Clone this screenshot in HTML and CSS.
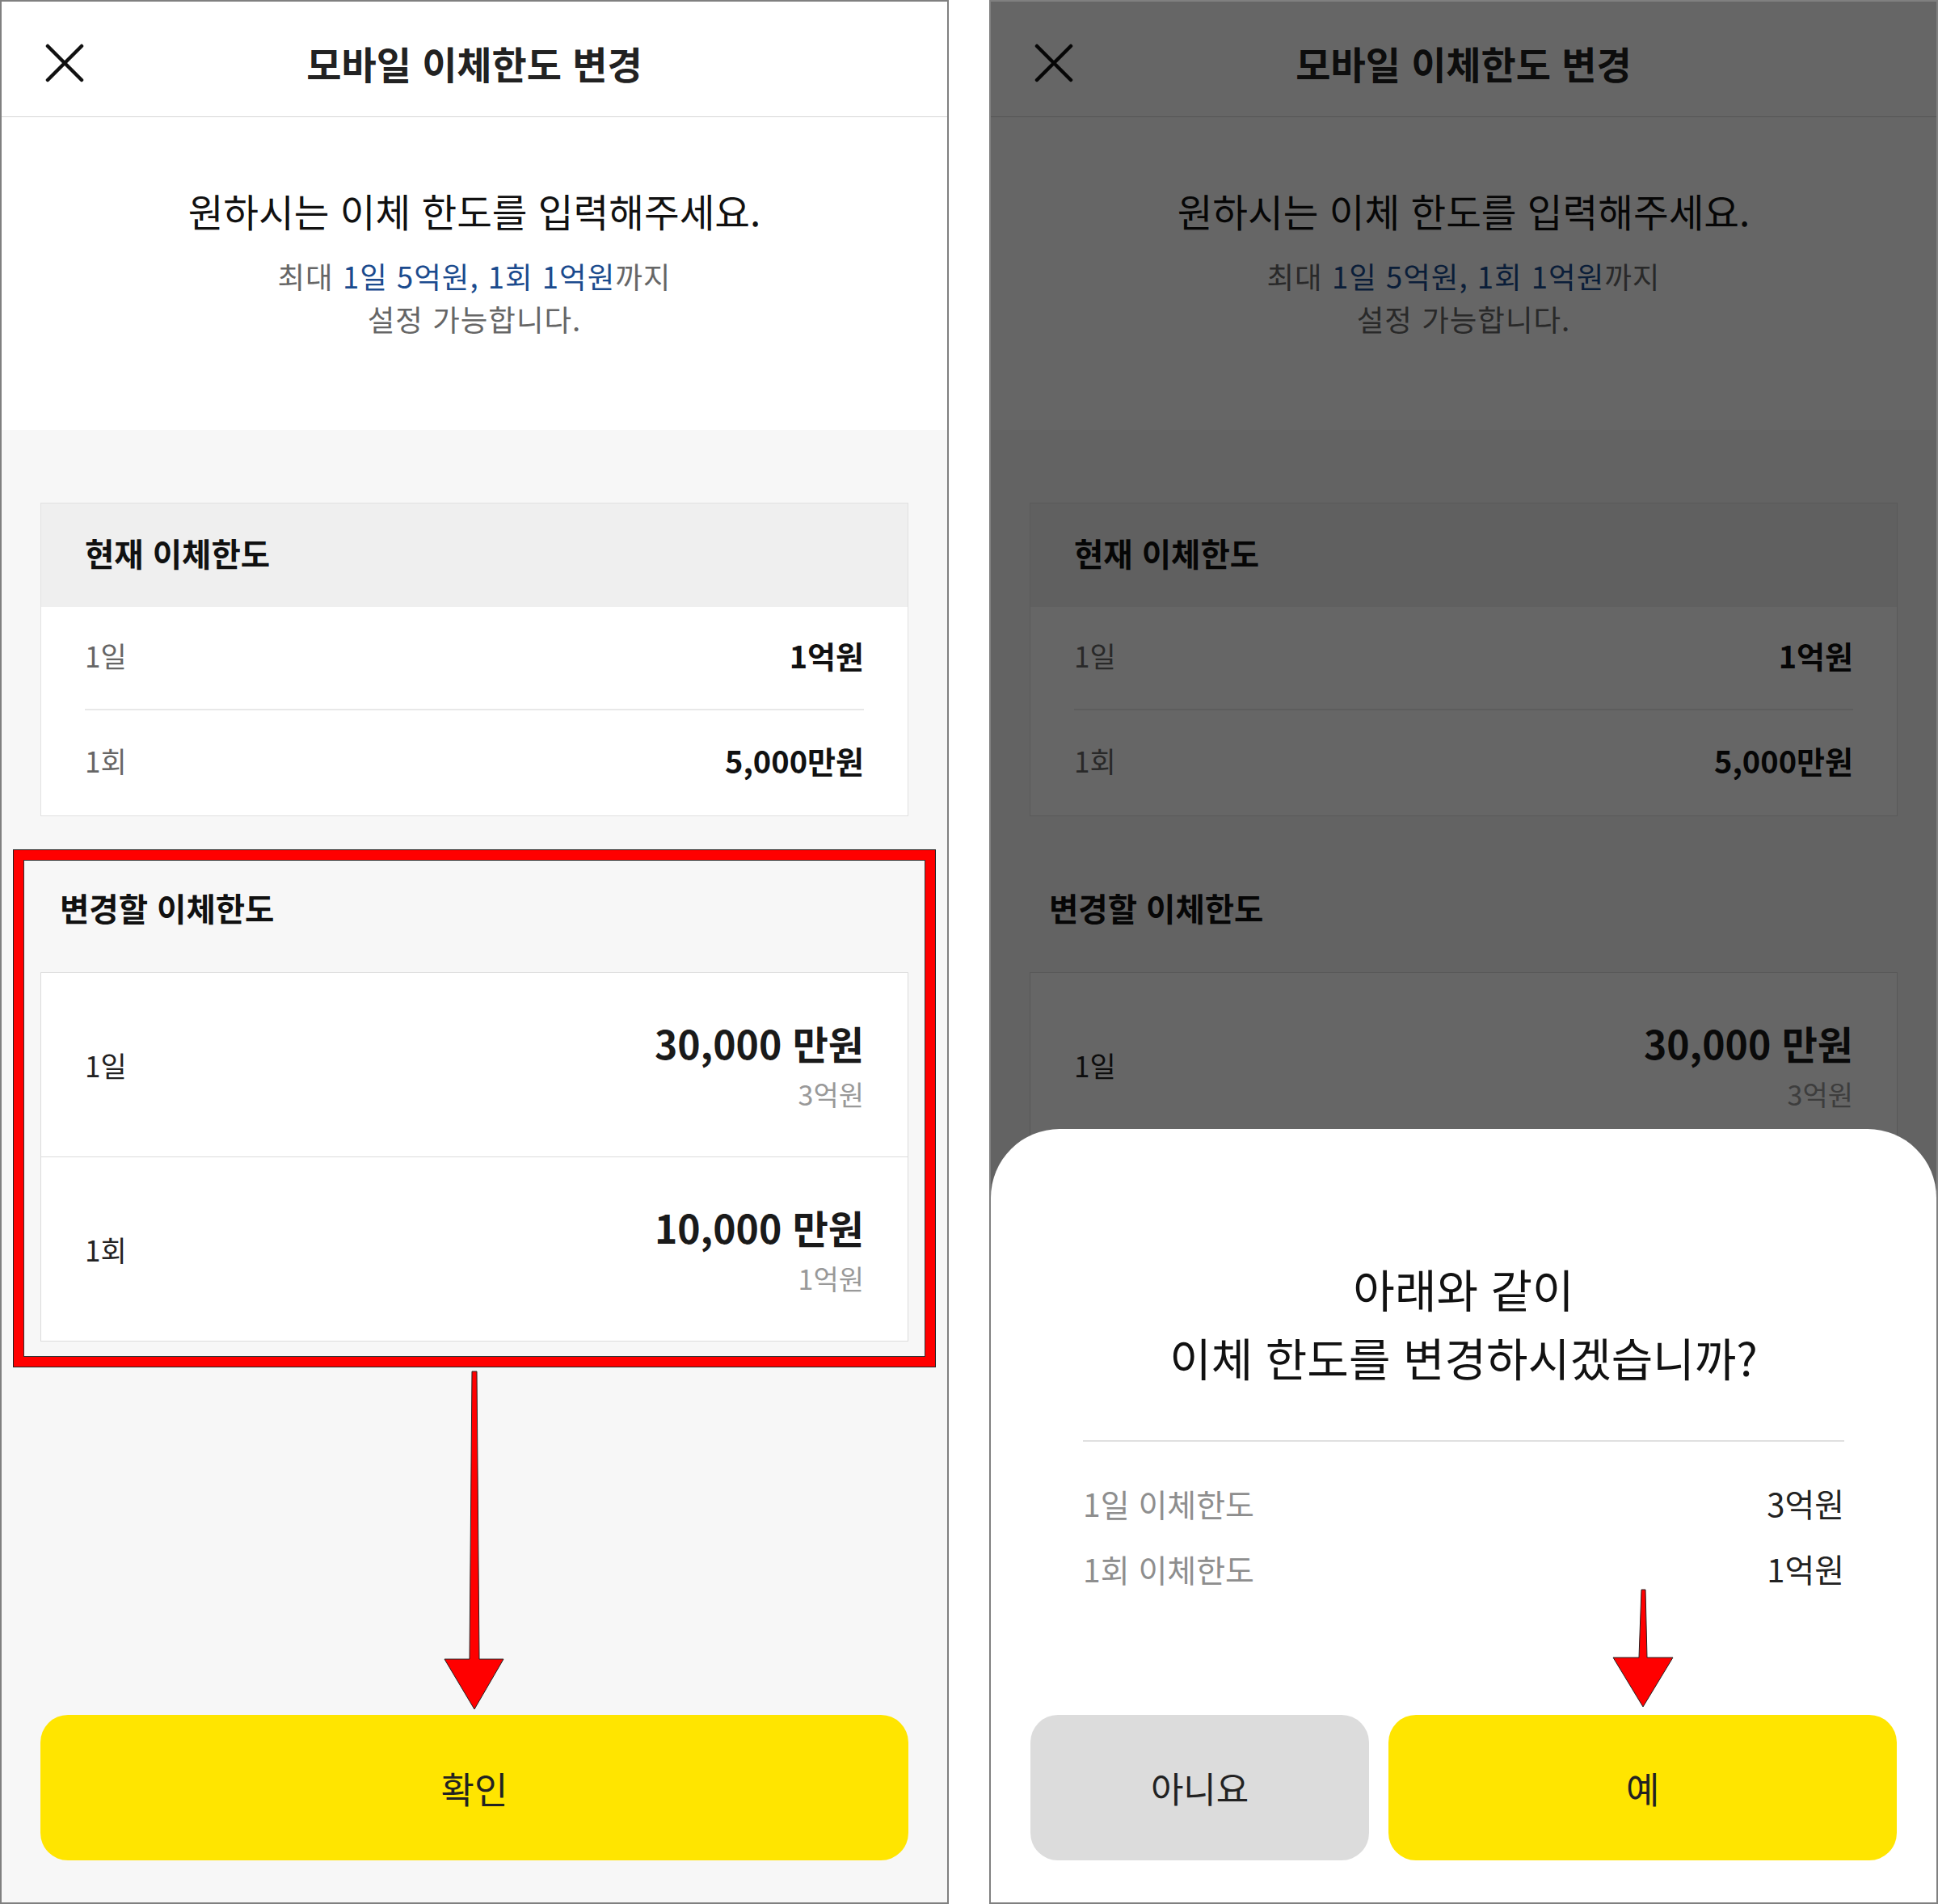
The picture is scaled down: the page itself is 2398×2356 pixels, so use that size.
FILE: index.html
```html
<!DOCTYPE html>
<html lang="ko">
<head>
<meta charset="utf-8">
<title>모바일 이체한도 변경</title>
<link rel="stylesheet" href="styles.css">
</head>
<body>
<div class="page">
  <section class="phone">
    <header class="topbar">
      <span class="close"><svg viewBox="0 0 48 48" width="48" height="48"><path d="M3 3L45 45M45 3L3 45" stroke="#111" stroke-width="4.5" stroke-linecap="round" fill="none"/></svg></span>
      <h1 class="title">모바일 이체한도 변경</h1>
      <span></span>
    </header>
    <div class="intro">
      <p class="lead">원하시는 이체 한도를 입력해주세요.</p>
      <p class="hint">최대 <em>1일 5억원, 1회 1억원</em>까지<br>설정 가능합니다.</p>
    </div>
    <div class="body">
      <div class="card current">
        <div class="card-head">현재 이체한도</div>
        <div class="card-rows">
          <div class="row"><span class="label">1일</span><span class="val">1억원</span></div>
          <div class="row"><span class="label">1회</span><span class="val">5,000만원</span></div>
        </div>
      </div>
      <div class="change">
        <h2 class="change-title">변경할 이체한도</h2>
        <div class="card edit">
          <div class="edit-row"><span class="label dark">1일</span><div class="amount"><span class="big">30,000 만원</span><span class="small">3억원</span></div></div>
          <div class="edit-row"><span class="label dark">1회</span><div class="amount"><span class="big">10,000 만원</span><span class="small">1억원</span></div></div>
        </div>
        <div class="highlight"></div>
      </div>
      <button class="btn yes wide">확인</button>
    </div>
    <svg class="arrow arrow-left" viewBox="0 0 86 430" width="86" height="430"><polygon points="39,7 45,7 48,363 78,363 42,425 5,363 36,363" fill="#ff0000" stroke="#222" stroke-width="1" stroke-linejoin="round"/></svg>
  </section>

  <section class="phone">
    <header class="topbar">
      <span class="close"><svg viewBox="0 0 48 48" width="48" height="48"><path d="M3 3L45 45M45 3L3 45" stroke="#111" stroke-width="4.5" stroke-linecap="round" fill="none"/></svg></span>
      <h1 class="title">모바일 이체한도 변경</h1>
      <span></span>
    </header>
    <div class="intro">
      <p class="lead">원하시는 이체 한도를 입력해주세요.</p>
      <p class="hint">최대 <em>1일 5억원, 1회 1억원</em>까지<br>설정 가능합니다.</p>
    </div>
    <div class="body">
      <div class="card current">
        <div class="card-head">현재 이체한도</div>
        <div class="card-rows">
          <div class="row"><span class="label">1일</span><span class="val">1억원</span></div>
          <div class="row"><span class="label">1회</span><span class="val">5,000만원</span></div>
        </div>
      </div>
      <div class="change">
        <h2 class="change-title">변경할 이체한도</h2>
        <div class="card edit">
          <div class="edit-row"><span class="label dark">1일</span><div class="amount"><span class="big">30,000 만원</span><span class="small">3억원</span></div></div>
          <div class="edit-row"><span class="label dark">1회</span><div class="amount"><span class="big">10,000 만원</span><span class="small">1억원</span></div></div>
        </div>
      </div>
      <button class="btn yes wide">확인</button>
    </div>
    <div class="dim"></div>
    <div class="sheet">
      <p class="question">아래와 같이<br>이체 한도를 변경하시겠습니까?</p>
      <div class="sheet-line"></div>
      <div class="summary">
        <div class="sum-row"><span class="sum-label">1일 이체한도</span><span class="sum-val">3억원</span></div>
        <div class="sum-row"><span class="sum-label">1회 이체한도</span><span class="sum-val">1억원</span></div>
      </div>
      <div class="actions">
        <button class="btn no">아니요</button>
        <button class="btn yes grow">예</button>
      </div>
    </div>
    <svg class="arrow arrow-right" viewBox="0 0 86 158" width="86" height="158"><polygon points="41,7 46,7 48,91 80,91 43,152 6,91 38,91" fill="#ff0000" stroke="#222" stroke-width="1" stroke-linejoin="round"/></svg>
  </section>
</div>
</body>
</html>
```

FILE: styles.css
```css
* { box-sizing: border-box; }
html, body { margin: 0; padding: 0; background: #ffffff; }
body {
  font-family: "Noto Sans CJK KR", "Noto Sans", sans-serif;
  color: #111;
}
.page {
  display: flex;
  gap: 50px;
  width: 2398px;
  height: 2356px;
}
.phone {
  position: relative;
  width: 1174px;
  height: 2356px;
  border: 2px solid #808080;
  background: #f7f7f7;
  display: flex;
  flex-direction: column;
  overflow: hidden;
}
.topbar {
  height: 143px;
  padding-top: 10px;
  background: #fff;
  border-bottom: 1px solid #d6d6d6;
  display: grid;
  grid-template-columns: 1fr auto 1fr;
  align-items: center;
}
.close {
  padding-left: 54px;
  display: flex;
  align-items: center;
}
.close svg { display: block; }
.title {
  margin: 0;
  font-size: 47px;
  line-height: 60px;
  font-weight: 700;
  color: #222;
}
.intro {
  background: #fff;
  padding: 86px 0 111px;
  text-align: center;
}
.lead {
  margin: 0;
  font-size: 47.5px;
  line-height: 60px;
  color: #111;
}
.hint {
  margin: 24px 0 0;
  font-size: 36.5px;
  letter-spacing: 1px;
  line-height: 53px;
  color: #666;
}
.hint em {
  font-style: normal;
  color: #1b4b8e;
}
.body {
  flex: 1;
  display: flex;
  flex-direction: column;
  padding: 90px 48px 52px;
}
.card {
  background: #fff;
  border: 1px solid #e1e1e1;
}
.card-head {
  height: 128px;
  background: #efefef;
  padding: 0 54px 8px;
  display: flex;
  align-items: center;
  font-size: 39.5px;
  font-weight: 700;
  color: #111;
}
.card-rows { padding: 0 54px; }
.row {
  height: 128px;
  padding-bottom: 8px;
  display: flex;
  justify-content: space-between;
  align-items: center;
}
.row + .row { height: 130px; }
.row:first-child { border-bottom: 2px solid #e8e8e8; }
.label {
  font-size: 35px;
  color: #666;
}
.label.dark { color: #222; }
.val {
  font-size: 38px;
  font-weight: 700;
  color: #111;
}
.change {
  position: relative;
  margin-top: 85px;
}
.change-title {
  margin: 0 0 52px;
  padding-left: 24px;
  font-size: 39.5px;
  line-height: 56px;
  font-weight: 700;
  color: #111;
}
.card.edit { border-color: #dcdcdc; }
.edit-row {
  height: 227px;
  padding: 0 54px;
  display: flex;
  justify-content: space-between;
  align-items: center;
}
.edit-row:first-child {
  height: 228px;
  border-bottom: 1px solid #dcdcdc;
}
.amount {
  display: flex;
  flex-direction: column;
  align-items: flex-end;
}
.big {
  font-size: 48px;
  line-height: 60px;
  font-weight: 700;
  color: #1a1a1a;
}
.small {
  margin-top: 12px;
  font-size: 34px;
  line-height: 44px;
  color: #999;
}
.highlight {
  position: absolute;
  top: -43px;
  left: -33px;
  right: -33px;
  bottom: -31px;
  border: 12px solid #ff0000;
  box-shadow: 0 0 0 1px #222, inset 0 0 0 1px #333;
  pointer-events: none;
}
.btn {
  height: 180px;
  border: none;
  border-radius: 34px;
  font-family: inherit;
  font-size: 45px;
  color: #222;
  padding: 0;
}
.btn.yes { background: #ffe500; }
.btn.no { background: #dcdcdc; flex: 2; font-size: 44px; }
.btn.grow { flex: 3; }
.btn.wide {
  margin-top: auto;
  width: 100%;
}
.arrow {
  position: absolute;
  z-index: 10;
  display: block;
}
.arrow-left { left: 543px; top: 1688px; }
.arrow-right { left: 764px; top: 1958px; }
.dim {
  position: absolute;
  inset: 0;
  background: rgba(0, 0, 0, 0.6);
  z-index: 5;
}
.sheet {
  position: absolute;
  left: 0;
  right: 0;
  top: 1395px;
  bottom: 0;
  z-index: 6;
  background: #fff;
  border-radius: 85px 85px 0 0;
  display: flex;
  flex-direction: column;
  padding: 0 49px 52px;
}
.question {
  margin: 154px 0 0;
  text-align: center;
  font-size: 56px;
  line-height: 85px;
  color: #111;
}
.sheet-line {
  margin: 61px 65px 0;
  height: 2px;
  background: #e0e0e0;
}
.summary {
  margin: 51px 65px 0;
  display: flex;
  flex-direction: column;
  gap: 31px;
}
.sum-row {
  display: flex;
  justify-content: space-between;
  align-items: center;
  font-size: 39px;
  line-height: 50px;
}
.sum-label { color: #8e8e8e; }
.sum-val { color: #222; font-size: 40px; }
.actions {
  margin-top: auto;
  display: flex;
  gap: 24px;
}
```
